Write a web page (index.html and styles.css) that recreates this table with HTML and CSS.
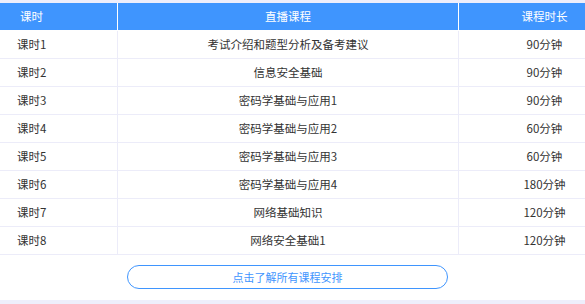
FILE: index.html
```html
<!DOCTYPE html>
<html lang="zh-CN">
<head>
<meta charset="utf-8">
<title>课程安排</title>
<link rel="stylesheet" href="styles.css">
</head>
<body>
<div class="panel">
  <div class="row head">
    <div class="c1">课时</div>
    <div class="c2">直播课程</div>
    <div class="c3">课程时长</div>
  </div>
  <div class="row"><div class="c1">课时1</div><div class="c2">考试介绍和题型分析及备考建议</div><div class="c3">90分钟</div></div>
  <div class="row"><div class="c1">课时2</div><div class="c2">信息安全基础</div><div class="c3">90分钟</div></div>
  <div class="row"><div class="c1">课时3</div><div class="c2">密码学基础与应用1</div><div class="c3">90分钟</div></div>
  <div class="row"><div class="c1">课时4</div><div class="c2">密码学基础与应用2</div><div class="c3">60分钟</div></div>
  <div class="row"><div class="c1">课时5</div><div class="c2">密码学基础与应用3</div><div class="c3">60分钟</div></div>
  <div class="row"><div class="c1">课时6</div><div class="c2">密码学基础与应用4</div><div class="c3">180分钟</div></div>
  <div class="row"><div class="c1">课时7</div><div class="c2">网络基础知识</div><div class="c3">120分钟</div></div>
  <div class="row"><div class="c1">课时8</div><div class="c2">网络安全基础1</div><div class="c3">120分钟</div></div>
  <div class="foot">
    <a class="more" href="#">点击了解所有课程安排</a>
  </div>
</div>
</body>
</html>
```

FILE: styles.css
```css
html, body {
  margin: 0;
  padding: 0;
}
body {
  background: #eeeefb;
  font-family: "Microsoft YaHei", "Noto Sans CJK SC", "Noto Sans", sans-serif;
  font-size: 11.5px;
  color: #333333;
  padding-top: 3px;
}
.panel {
  background: #ffffff;
  height: 297px;
}
.row {
  display: grid;
  grid-template-columns: 118px 341px 1fr;
  height: 28px;
  box-sizing: border-box;
  border-bottom: 1px solid #ececf9;
}
.row > div {
  display: flex;
  align-items: center;
  box-sizing: border-box;
  height: 27px;
  line-height: 27px;
}
.c1 {
  padding-left: 17px;
  border-right: 1px solid #ececf9;
}
.c2 {
  justify-content: center;
  border-right: 1px solid #ececf9;
}
.c3 {
  justify-content: center;
  padding-left: 45px;
}
.head {
  background: #3f95fe;
  color: #ffffff;
  border-bottom: 1px solid #ffffff;
}
.head .c1 {
  padding-left: 20px;
  border-right-color: #ffffff;
}
.head .c2 {
  border-right-color: #ffffff;
}
.foot {
  padding: 10px 0 0 127px;
}
.more {
  display: flex;
  align-items: center;
  justify-content: center;
  width: 321px;
  height: 24px;
  box-sizing: border-box;
  border: 1px solid #3f95fe;
  border-radius: 12px;
  color: #3f95fe;
  font-size: 11px;
  text-decoration: none;
}
```
